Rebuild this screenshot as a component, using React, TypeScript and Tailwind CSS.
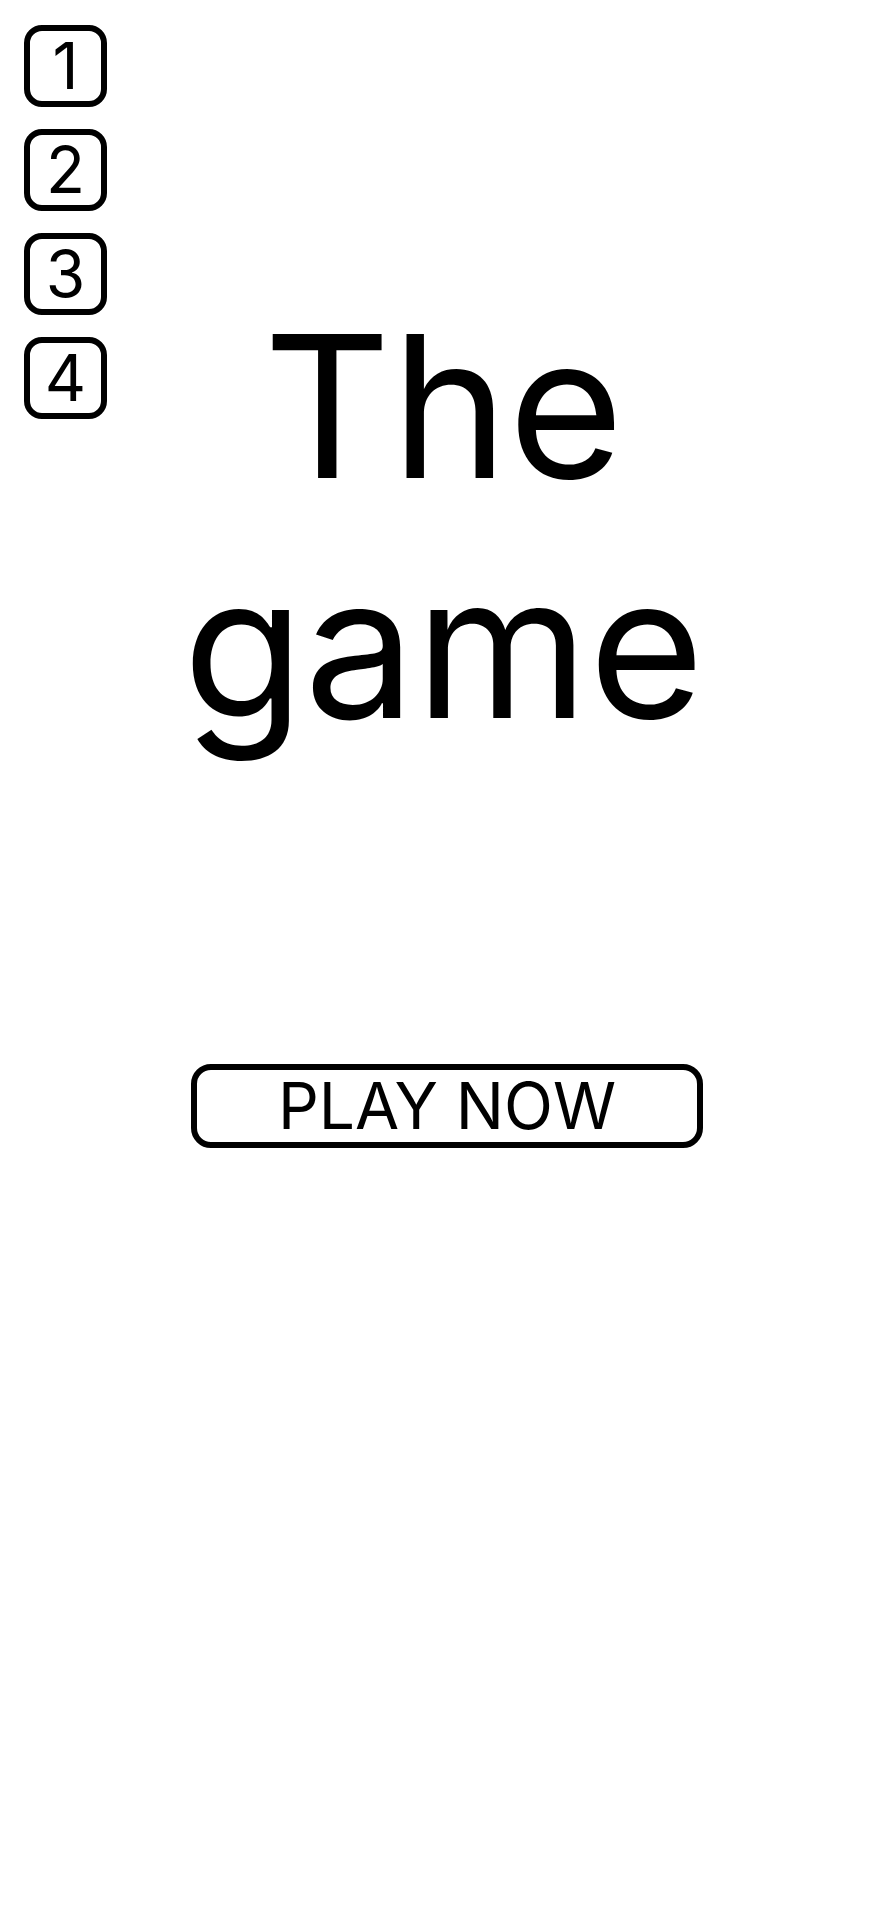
const levels = [1, 2, 3, 4];

export default function App() {
  return (
    <div className="relative min-h-[1920px] bg-white text-black" style={{ fontFamily: 'Inter, "Noto Sans", sans-serif' }}>
      <nav className="absolute left-[24px] top-[25px] flex flex-col gap-[22px]">
        {levels.map((n) => (
          <button
            key={n}
            className="flex h-[82px] w-[83px] items-center justify-center rounded-[18px] border-[6px] border-black text-[64px] leading-none"
          >
            {n}
          </button>
        ))}
      </nav>

      <main className="flex flex-col items-center pt-[286px]">
        <h1 className="w-full text-center text-[198px] leading-[240px] font-normal">The game</h1>
        <button className="ml-[7px] mt-[298px] flex h-[84px] w-[512px] items-center justify-center rounded-[20px] border-[6px] border-black text-[64px] leading-none">
          PLAY NOW
        </button>
      </main>
    </div>
  );
}
